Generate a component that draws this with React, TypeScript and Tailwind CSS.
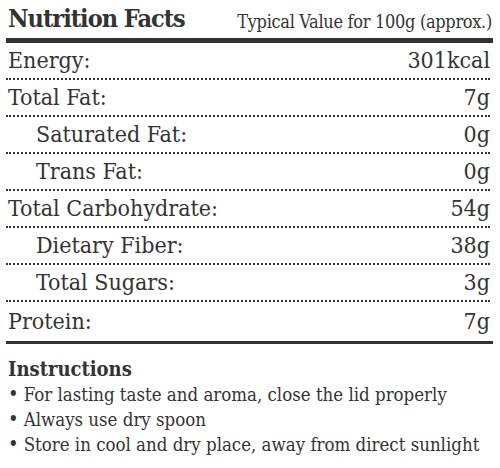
const rows = [
    { label: 'Energy:', value: '301kcal', indent: false },
    { label: 'Total Fat:', value: '7g', indent: false },
    { label: 'Saturated Fat:', value: '0g', indent: true },
    { label: 'Trans Fat:', value: '0g', indent: true },
    { label: 'Total Carbohydrate:', value: '54g', indent: false },
    { label: 'Dietary Fiber:', value: '38g', indent: true },
    { label: 'Total Sugars:', value: '3g', indent: true },
    { label: 'Protein:', value: '7g', indent: false },
];

const instructions = [
    'For lasting taste and aroma, close the lid properly',
    'Always use dry spoon',
    'Store in cool and dry place, away from direct sunlight',
];

export default function App() {
    return (
        <div
            className="h-[468px] w-[500px] bg-white px-[6px] text-[#333]"
            style={{ fontFamily: '"DejaVu Serif Condensed", "Liberation Serif", serif' }}
        >
            <div className="flex h-[38px] items-end justify-between px-[2px] pb-[7px]">
                <span className="text-[25px] leading-none font-bold tracking-[-1px]">Nutrition Facts</span>
                <span className="text-[18px] leading-none tracking-[-0.3px]">Typical Value for 100g (approx.)</span>
            </div>
            <div className="h-[5px] w-[487px] bg-[#333]" />
            {rows.map((row, i) => (
                <div
                    key={row.label}
                    className={
                        i < rows.length - 1
                            ? 'flex h-[37px] w-[484px] items-end justify-between border-b-2 border-dotted border-[#333] pb-[6px]'
                            : 'flex h-[39px] w-[484px] items-end justify-between pb-[8px]'
                    }
                >
                    <span className={row.indent ? 'pl-[30px] text-[23px] leading-none' : 'pl-[2px] text-[23px] leading-none'}>
                        {row.label}
                    </span>
                    <span className="text-[23px] leading-none">{row.value}</span>
                </div>
            ))}
            <div className="h-[3px] w-[487px] bg-[#333]" />
            <div className="px-[2px] pt-[12px]">
                <div className="text-[20px] leading-[26px] font-bold">Instructions</div>
                {instructions.map((text) => (
                    <div key={text} className="flex items-center gap-[5px] text-[18.5px] leading-[25px]">
                        <span className="text-[20px]">•</span>
                        <span>{text}</span>
                    </div>
                ))}
            </div>
        </div>
    );
}
